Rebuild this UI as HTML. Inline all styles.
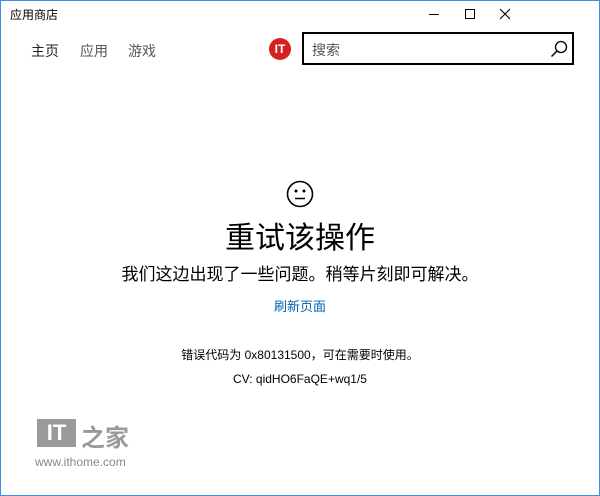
<!DOCTYPE html><html><head><meta charset="utf-8"><style>
body{margin:0;width:600px;height:496px;overflow:hidden;background:#fff;font-family:"Liberation Sans","Noto Sans CJK SC",sans-serif;position:relative}
.a{position:absolute;white-space:nowrap}
.c{position:absolute;left:0;width:600px;text-align:center;white-space:nowrap}
</style></head><body>
<div style="position:absolute;left:0;top:0;width:598px;height:494px;border:1px solid #3c8fd8;border-top:1px solid #3c8fd8"></div>
<div class="a" style="left:10px;top:6px;font-size:12px;color:#000">应用商店</div>
<div class="a" style="left:429px;top:14px;width:10px;height:1px;background:#000"></div>
<div class="a" style="left:465px;top:9px;width:8px;height:8px;border:1px solid #000"></div>
<svg class="a" style="left:499px;top:8px" width="12" height="12"><path d="M1 1L11 11M11 1L1 11" stroke="#000" stroke-width="1.1"/></svg>
<div class="a" style="left:31px;top:41px;font-size:14px;color:#222">主页</div>
<div class="a" style="left:80px;top:41px;font-size:14px;color:#555">应用</div>
<div class="a" style="left:128px;top:41px;font-size:14px;color:#555">游戏</div>
<div class="a" style="left:269px;top:38px;width:22px;height:22px;border-radius:50%;background:#d42020;color:#fff;font-size:12px;font-weight:bold;text-align:center;line-height:22px">IT</div>
<div class="a" style="left:302px;top:32px;width:272px;height:33px;border:2px solid #000;box-sizing:border-box"></div>
<div class="a" style="left:312px;top:40px;font-size:14px;color:#555">搜索</div>
<svg class="a" style="left:550px;top:40px" width="18" height="18"><circle cx="11" cy="7" r="5.5" fill="none" stroke="#000" stroke-width="1.3"/><path d="M7 11L1.5 16.5" stroke="#000" stroke-width="1.5"/></svg>
<svg class="a" style="left:286px;top:180px" width="28" height="28"><circle cx="14" cy="14" r="12.5" fill="none" stroke="#000" stroke-width="1.6"/><circle cx="10" cy="11" r="1.5"/><circle cx="18" cy="11" r="1.5"/><path d="M9 18.5H19" stroke="#000" stroke-width="1.5"/></svg>
<div class="c" style="top:213px;font-size:30px;color:#000">重试该操作</div>
<div class="c" style="top:260px;font-size:17px;color:#000">我们这边出现了一些问题。稍等片刻即可解决。</div>
<div class="c" style="top:296px;font-size:13px;color:#0063b1">刷新页面</div>
<div class="c" style="top:346px;font-size:12px;color:#000">错误代码为 0x80131500，可在需要时使用。</div>
<div class="c" style="top:372px;font-size:12px;color:#000">CV: qidHO6FaQE+wq1/5</div>
<div class="a" style="left:37px;top:419px;width:39px;height:28px;background:#9a9a9a;color:#fff;font-weight:bold;font-size:22px;line-height:28px;text-align:center">IT</div>
<div class="a" style="left:81px;top:418px;font-size:24px;color:#9a9a9a;font-weight:bold">之家</div>
<div class="a" style="left:35px;top:455px;font-size:12px;color:#888">www.ithome.com</div>
</body></html>
